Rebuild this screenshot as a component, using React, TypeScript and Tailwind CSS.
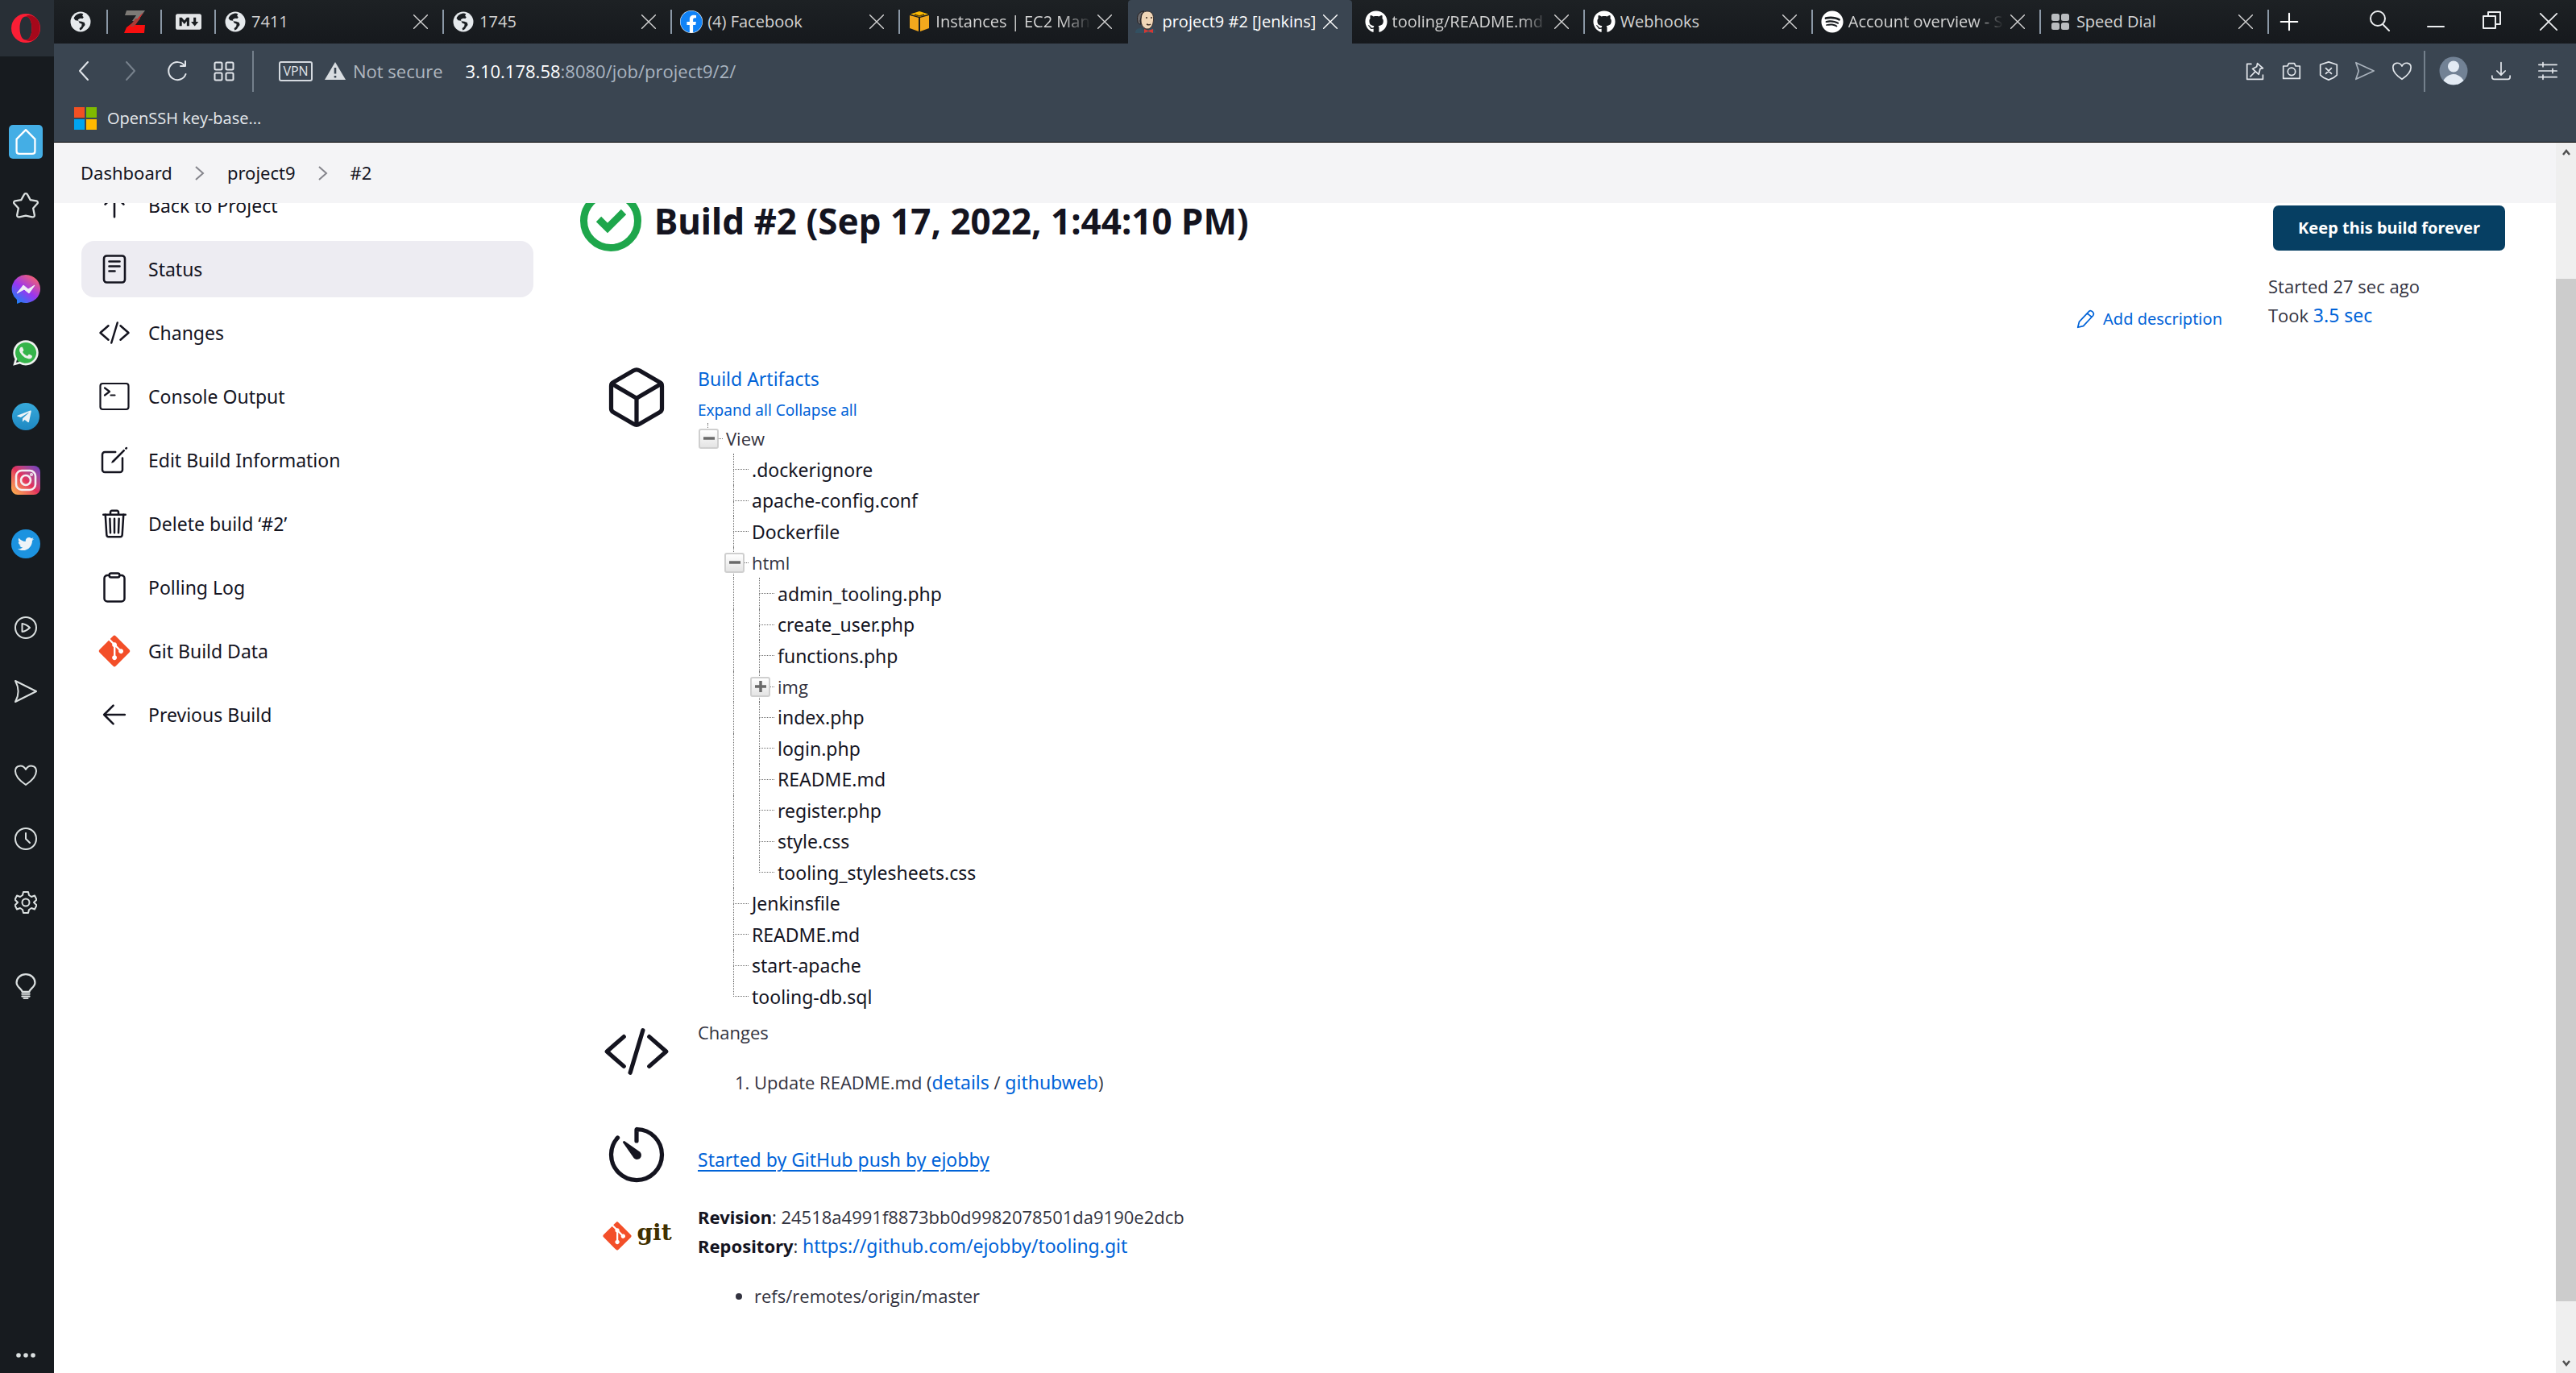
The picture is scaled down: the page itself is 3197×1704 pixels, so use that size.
import React from "react";
import {
  FaFacebook,
  FaGithub,
  FaSpotify,
  FaGitAlt,
  FaTelegramPlane,
  FaTwitter,
  FaWhatsapp,
  FaMarkdown,
} from "react-icons/fa";
import {
  IoCubeOutline,
  IoCodeSlashOutline,
  IoTimerOutline,
  IoTrashOutline,
  IoClipboardOutline,
  IoCreateOutline,
} from "react-icons/io5";

type Kids = { children: React.ReactNode };

/* Thin line icon on a 28 unit grid */
function Line({ children, size = "size-7", width = 2 }: Kids & { size?: string; width?: number }) {
  return (
    <svg
      viewBox="0 0 28 28"
      className={`${size} shrink-0`}
      fill="none"
      stroke="currentColor"
      strokeWidth={width}
      strokeLinecap="round"
      strokeLinejoin="round"
      aria-hidden="true"
    >
      {children}
    </svg>
  );
}

/* ---------- Favicons ---------- */

function Globe() {
  return (
    <svg viewBox="0 0 28 28" className="size-7 shrink-0" aria-hidden="true">
      <circle cx="14" cy="14" r="12.500" fill="#e6eaed" />
      <path
        d="M15 3.500c-4.500 0-8 2.400-9.400 6.200l2 2.600 3.600.4 1.400 2.800 3 1.200-.4 3-2.600 2.600.6 2.200c2-.4 3.400-1.600 4-3.400l2.400-3-.8-3-3.400-1.400-3.800-.4-.8-2 2.800-1.600 3 .4 1.200-1.800-1.600-1.600 1-2.400z"
        fill="#1a1e22"
      />
    </svg>
  );
}

function ZIcon() {
  return (
    <svg viewBox="0 0 28 28" className="size-7 shrink-0" aria-hidden="true">
      <path d="M4 0h23l-9 13H11l5-7H2z" fill="#7d7a76" />
      <path d="M17 11l8-9-10 16h12l-1 10H1l3-7z" fill="#f80f0f" />
      <path d="M15 10h6l-8 10H8z" fill="#a83c36" />
    </svg>
  );
}

function CubeFav() {
  return (
    <svg viewBox="0 0 28 28" className="size-7 shrink-0" aria-hidden="true">
      <path d="M2 6l11 3v17L2 22z" fill="#f2a81d" />
      <path d="M26 6L15 9v17l11-4z" fill="#f2a81d" />
      <path d="M14 1l11 3.400L14 8 3 4.400z" fill="#f9b800" />
      <path d="M8 5l6 2 6-2" fill="none" stroke="#5a3c08" strokeWidth="1.500" />
    </svg>
  );
}

function JenkinsFav() {
  return (
    <svg viewBox="0 0 28 28" className="size-7 shrink-0" aria-hidden="true">
      <path d="M1 28c0-4 2-6 7-6l6 3 6-3c4 0 6 2 6 6z" fill="#335061" />
      <path d="M8 12C8 4 11 1 16 1c6 0 8 5 7.500 11C23 19 20 23 16 23S8 19 8 12z" fill="#f0d6b7" stroke="#3b3331" strokeWidth="1" />
      <path d="M4 14C2 6 6 1 12 1c-3 2-4 5-4 8l-1 4 1 4c-2 0-4-1-4-3z" fill="#6d6b6d" stroke="#231f20" />
      <path d="M14 9h2M20 9h2M15 17c2 1 4 1 5 0" stroke="#3b2a20" strokeWidth="1.400" fill="none" />
      <path d="M12 23l5 2 6-2v5l-6-2-5 2z" fill="#d33833" />
    </svg>
  );
}

function DialFav() {
  return (
    <svg viewBox="0 0 28 28" className="size-7 shrink-0 text-[#b9bcbf]" fill="currentColor" aria-hidden="true">
      <rect x="3" y="4" width="10" height="9" rx="2.500" />
      <rect x="15" y="4" width="10" height="9" rx="2.500" />
      <rect x="3" y="15" width="10" height="9" rx="2.500" />
      <rect x="15" y="15" width="10" height="9" rx="2.500" />
    </svg>
  );
}

/* ---------- Tab strip ---------- */

const tabs = [
  { title: "7411", icon: <Globe /> },
  { title: "1745", icon: <Globe /> },
  { title: "(4) Facebook", icon: <FaFacebook className="size-7 shrink-0 rounded-full bg-white text-[#1183f7]" /> },
  { title: "Instances | EC2 Mana", icon: <CubeFav />, fade: true },
  { title: "project9 #2 [Jenkins]", icon: <JenkinsFav />, active: true },
  { title: "tooling/README.md", icon: <FaGithub className="size-7 shrink-0 text-white" />, fade: true, quiet: true },
  { title: "Webhooks", icon: <FaGithub className="size-7 shrink-0 text-white" /> },
  { title: "Account overview - S", icon: <FaSpotify className="size-7 shrink-0 text-white" />, fade: true },
  { title: "Speed Dial", icon: <DialFav /> },
];

function Divider({ hidden = false }: { hidden?: boolean }) {
  return <span className={`h-[30px] w-[2px] shrink-0 ${hidden ? "bg-transparent" : "bg-[#8b98a6]"}`} />;
}

function Cross({ size }: { size: string }) {
  return (
    <Line size={size} width={2.2}>
      <path d="M1 1l26 26M27 1L1 27" />
    </Line>
  );
}

function TabStrip() {
  return (
    <div className="flex h-[54px] items-center bg-gradient-to-b from-[#1d2124] to-[#16191d] text-[20px] text-[#d4d4d4]">
      <button aria-label="Pinned tab" className="flex w-[65px] justify-center"><Globe /></button>
      <Divider />
      <button aria-label="Pinned tab" className="flex w-[65px] justify-center"><ZIcon /></button>
      <Divider />
      <button aria-label="Pinned tab" className="flex w-[65px] justify-center">
        <FaMarkdown className="size-8 text-[#e3e5e7]" />
      </button>
      <div className="flex h-full min-w-0 flex-1">
        {tabs.map((t) => (
          <div key={t.title} className="flex h-full min-w-0 flex-1 items-center">
            <Divider hidden={t.active || t.quiet} />
            <div
              className={`flex h-full min-w-0 flex-1 items-center gap-1 pr-[18px] ${
                t.active ? "mr-1 rounded-t-sm bg-[#3a4551] pl-2 text-white" : "pl-[10px]"
              }`}
            >
              <button className="flex min-w-0 flex-1 items-center gap-[6px] text-left">
                {t.icon}
                <span
                  className={`min-w-0 flex-1 overflow-hidden whitespace-nowrap ${
                    t.fade ? "[mask-image:linear-gradient(to_right,black_80%,transparent_98%)]" : ""
                  }`}
                >
                  {t.title}
                </span>
              </button>
              <button aria-label="Close tab"><Cross size="size-[18px]" /></button>
            </div>
          </div>
        ))}
      </div>
      <Divider />
      <button aria-label="New tab" className="flex w-[50px] justify-center text-white">
        <Line size="size-6" width={2.4}><path d="M14 2v24M2 14h24" /></Line>
      </button>
      <div className="ml-[52px] flex text-[#eceef0]">
        <button aria-label="Search tabs" className="flex w-[70px] justify-center pb-1">
          <Line size="size-7"><circle cx="12" cy="12" r="9" /><path d="M18 19l8 8" /></Line>
        </button>
        <button aria-label="Minimize" className="flex w-[70px] justify-center">
          <Line size="size-7"><path d="M4 22h20" /></Line>
        </button>
        <button aria-label="Restore" className="flex w-[70px] justify-center">
          <Line size="size-7"><path d="M3 9h15v15H3z M9 9V4h15v15h-6" /></Line>
        </button>
        <button aria-label="Close" className="flex w-[69px] items-center justify-center">
          <Cross size="size-[22px]" />
        </button>
      </div>
    </div>
  );
}

/* ---------- Address bar ---------- */

function IconButton({ label, children, className }: Kids & { label: string; className: string }) {
  return (
    <button aria-label={label} className={`flex shrink-0 justify-center ${className}`}>
      {children}
    </button>
  );
}

function AddressBar() {
  return (
    <div className="flex h-[68px] items-center bg-[#3a4551] pl-2 text-[#e1e5ea]">
      <IconButton label="Back" className="w-[58px]">
        <Line><path d="M19 3L9 14l10 11" /></Line>
      </IconButton>
      <IconButton label="Forward" className="w-[58px] text-[#77818c]">
        <Line><path d="M9 3l10 11L9 25" /></Line>
      </IconButton>
      <IconButton label="Reload" className="w-[58px]">
        <Line><path d="M23 7.500A11 11 0 1 0 24.500 18M24 2v6h-6" /></Line>
      </IconButton>
      <IconButton label="Speed dial" className="w-[58px]">
        <Line>
          <rect x="2.500" y="3.500" width="9" height="9" rx="1.500" />
          <rect x="16.500" y="3.500" width="9" height="9" rx="1.500" />
          <rect x="2.500" y="16.500" width="9" height="9" rx="1.500" />
          <rect x="16.500" y="16.500" width="9" height="9" rx="1.500" />
        </Line>
      </IconButton>
      <span className="ml-[6px] h-[51px] w-[2px] bg-[#74808c]" />
      <button className="ml-[31px] flex h-[25px] w-[42px] items-center justify-center rounded-[3px] border-2 border-[#d5dae0] text-[16px]">
        VPN
      </button>
      <button className="ml-[14px] flex items-center gap-2 text-[22px] text-[#b0b8c0]">
        <svg viewBox="0 0 28 24" className="h-6 w-7" aria-hidden="true">
          <path d="M14 1L27 23H1z" fill="#d9dde1" />
          <path d="M14 8v7.500M14 18v2.500" stroke="#3a4551" strokeWidth="2.600" />
        </svg>
        Not secure
      </button>
      <button aria-label="Page address" className="ml-7 flex-1 text-left text-[22px] text-[#a9b4c0]">
        <span className="text-white">3.10.178.58</span>:8080/job/project9/2/
      </button>
      <IconButton label="Pin page" className="w-[45px]">
        <Line size="size-6">
          <path d="M8 4H2v22h23v-6M17 3l8 7-4 1-2 8-9-8 6-3zM13 16l-6 6" />
        </Line>
      </IconButton>
      <IconButton label="Snapshot" className="w-[46px]">
        <Line size="size-6"><path d="M2 7h6l2-4h8l2 4h6v18H2z" /><circle cx="14" cy="15" r="5.500" /></Line>
      </IconButton>
      <IconButton label="Ad blocker" className="w-[45px]">
        <Line size="size-6"><path d="M14 1l12 4v15l-5 4-7 3-7-3-5-4V5zM10 10l8 8M18 10l-8 8" /></Line>
      </IconButton>
      <IconButton label="My flow" className="w-[46px] text-[#a9b2bc]">
        <Line size="size-6"><path d="M1 2l26 12L1 26l4-12z" /></Line>
      </IconButton>
      <IconButton label="Bookmark page" className="w-[45px]">
        <Line size="size-6"><path d="M14 26C8 22 1 15 1 9c0-7 9-9 13-2 4-7 13-5 13 2 0 6-7 13-13 17z" /></Line>
      </IconButton>
      <span className="ml-[5px] h-[51px] w-[2px] bg-[#74808c]" />
      <IconButton label="Profile" className="ml-[17px] w-[36px]">
        <svg viewBox="0 0 36 36" className="size-9" aria-hidden="true">
          <circle cx="18" cy="18" r="17.500" fill="#728295" />
          <circle cx="18" cy="12.500" r="7" fill="#e3ebf4" />
          <path d="M5.500 30c2-4 7-8 12.500-8s10.500 4 12.500 8a17.500 17.500 0 0 1-25 0z" fill="#e3ebf4" />
        </svg>
      </IconButton>
      <IconButton label="Downloads" className="ml-[12px] w-[58px]">
        <Line size="size-6"><path d="M14 2v18M8 14l6 6 6-6M1 21v2c0 2 1 3 3 3h20c2 0 3-1 3-3v-2" /></Line>
      </IconButton>
      <IconButton label="Easy setup" className="mr-[6px] w-[58px]">
        <Line size="size-6"><path d="M1 5h26M1 14h26M1 23h26M7 2v6M21 11v6M7 20v6" /></Line>
      </IconButton>
    </div>
  );
}

function Bookmarks() {
  return (
    <div className="flex h-[55px] items-center border-b border-black bg-[#3a4551] pb-1 pl-[25px]">
      <a href="#bookmark" className="flex items-center gap-[13px] text-[20px] text-[#e6e9ec]">
        <span className="grid size-7 grid-cols-2 gap-[2px]">
          <span className="bg-[#f25022]" />
          <span className="bg-[#7fba00]" />
          <span className="bg-[#00a4ef]" />
          <span className="bg-[#ffb900]" />
        </span>
        OpenSSH key-base...
      </a>
    </div>
  );
}

/* ---------- Opera side rail ---------- */

const railGroups: { label: string; icon: React.ReactNode }[][] = [
  [
    {
      label: "Home",
      icon: (
        <span className="flex size-[42px] items-center justify-center rounded-[5px] bg-[#44aee5] text-white">
          <Line size="size-8"><path d="M14 1l10 10v13c0 2-1 3-3 3H7c-2 0-3-1-3-3V11z" /></Line>
        </span>
      ),
    },
    {
      label: "Pinboards",
      icon: (
        <Line size="size-8">
          <path d="M14 1c1 0 1.500.500 2 1.500L19 8l6.500 1c1.500.500 2 2 1 3L22 17l1.500 7.500c0 1.500-1 2.500-2.500 2L14 25l-7 1.500c-1.500.500-2.500-.500-2.500-2L6 17l-4.500-5c-1-1-.500-2.500 1-3L9 8l3-5.500C12.500 1.500 13 1 14 1z" />
        </Line>
      ),
    },
  ],
  [
    {
      label: "Messenger",
      icon: (
        <svg viewBox="0 0 36 36" className="size-9" aria-hidden="true">
          <defs>
            <linearGradient id="msg" x1="0.1" y1="1" x2="0.8" y2="0">
              <stop offset="0" stopColor="#0a8cf5" />
              <stop offset="0.500" stopColor="#9a35f0" />
              <stop offset="1" stopColor="#fc6568" />
            </linearGradient>
          </defs>
          <path d="M18 0a18 17.500 0 1 1-6 34l-5 2v-5A17.500 17.500 0 0 1 18 0z" fill="url(#msg)" />
          <path d="M7 23l8-10 6 5 8-5-7 10-6-5z" fill="#f0eef5" stroke="#f0eef5" strokeLinejoin="round" />
        </svg>
      ),
    },
    {
      label: "WhatsApp",
      icon: (
        <span className="relative flex size-[34px] items-center justify-center">
          <span className="absolute inset-[3px] rounded-full bg-[#35b44a]" />
          <FaWhatsapp className="relative size-[36px] text-[#eef1ee]" />
        </span>
      ),
    },
    {
      label: "Telegram",
      icon: (
        <span className="flex size-[34px] items-center justify-center rounded-full bg-gradient-to-b from-[#37aadb] to-[#1e88c2]">
          <FaTelegramPlane className="mr-1 size-5 text-[#eef3f7]" />
        </span>
      ),
    },
    {
      label: "Instagram",
      icon: (
        <span className="flex size-9 items-center justify-center rounded-[8px] bg-gradient-to-tr from-[#fdb74a] via-[#e22f5c] to-[#6a3ac8] text-[#f4eef2]">
          <Line size="size-7" width={2.6}>
            <rect x="2" y="2" width="24" height="24" rx="7" />
            <circle cx="14" cy="14" r="6" />
            <circle cx="21" cy="7" r="0.700" />
          </Line>
        </span>
      ),
    },
    {
      label: "Twitter",
      icon: (
        <span className="flex size-9 items-center justify-center rounded-full bg-[#1c93e0]">
          <FaTwitter className="size-5 text-[#eef3f7]" />
        </span>
      ),
    },
  ],
  [
    {
      label: "Player",
      icon: <Line><circle cx="14" cy="14" r="13" /><path d="M9.500 9v10c3.500-.500 7-2.500 9.500-5-2.500-2.500-6-4.500-9.500-5z" /></Line>,
    },
    { label: "My Flow", icon: <Line><path d="M1 1l26 13L1 27c5-9 5-17 0-26z" /></Line> },
  ],
  [
    {
      label: "Bookmarks",
      icon: <Line><path d="M14 26C8 22 1 16 1 9c0-7 9-9 13-2 4-7 13-5 13 2 0 7-7 13-13 17z" /></Line>,
    },
    { label: "History", icon: <Line><circle cx="14" cy="14" r="13" /><path d="M14 7v7l5 5" /></Line> },
    {
      label: "Settings",
      icon: (
        <Line>
          <circle cx="14" cy="14" r="4.500" />
          <path d="M11 1h6l1 4 3 2 4-1.500 2.500 5L24 14l3.500 3.500-2.500 5L21 21l-3 2-1 4h-6l-1-4-3-2-4 1.500-2.500-5L4 14 .500 10.500l2.500-5L7 7l3-2z" />
        </Line>
      ),
    },
  ],
  [
    {
      label: "Tips",
      icon: (
        <Line size="size-8">
          <path d="M10 20c0-3-6-5-6-10a10 9 0 0 1 20 0c0 5-6 7-6 10zM10 22.500h8M10 25h8M12 27.500h4" />
        </Line>
      ),
    },
  ],
];

function SideRail() {
  return (
    <nav aria-label="Browser sidebar" className="flex w-[67px] shrink-0 flex-col bg-[#171b1f] pr-[3px] text-[#dbe0e0]">
      <div className="-mr-[3px] flex h-[70px] shrink-0 items-center justify-center bg-[#282f36] pr-[3px]">
        <svg viewBox="0 0 36 36" className="size-9" aria-hidden="true">
          <path fillRule="evenodd" d="M18 0a18 18 0 1 0 0 36 18 18 0 0 0 0-36zm0 3.500c4.500 0 7.500 6 7.500 14.500s-3 14.500-7.500 14.500S10.500 26.500 10.500 18 13.500 3.500 18 3.500z" fill="#fa1e35" />
          <path d="M18 3.500c4-4 17.500 0 17.500 14.500S22 36.500 18 32.500c4.500 0 7.500-6 7.500-14.500S22.500 3.500 18 3.500z" fill="#a5081b" />
        </svg>
      </div>
      <div className="mt-[66px] flex flex-col gap-[25px]">
        {railGroups.map((group) => (
          <div key={group[0].label} className="flex flex-col">
            {group.map((item) => (
              <button key={item.label} aria-label={item.label} className="flex h-[79px] items-center justify-center">
                {item.icon}
              </button>
            ))}
          </div>
        ))}
      </div>
      <button aria-label="Sidebar setup" className="mt-auto mb-2 flex h-7 items-center justify-center">
        <svg viewBox="0 0 28 28" className="size-7" fill="currentColor" aria-hidden="true">
          <circle cx="5" cy="14" r="2.800" />
          <circle cx="14" cy="14" r="2.800" />
          <circle cx="23" cy="14" r="2.800" />
        </svg>
      </button>
    </nav>
  );
}

/* ---------- Jenkins side panel ---------- */

const sideTasks = [
  { label: "Back to Project", icon: <Line size="size-10" width={1.8}><path d="M14 24V5M6 13l8-8 8 8" /></Line> },
  {
    label: "Status",
    active: true,
    icon: (
      <svg viewBox="0 0 40 40" className="size-10" fill="none" stroke="currentColor" strokeWidth="2.600" strokeLinecap="round" aria-hidden="true">
        <rect x="7" y="3.500" width="26" height="33" rx="3.500" />
        <path d="M13.500 10.500h13M13.500 16.500h13M13.500 22.500h7" />
      </svg>
    ),
  },
  { label: "Changes", icon: <IoCodeSlashOutline className="size-10" /> },
  {
    label: "Console Output",
    icon: (
      <svg viewBox="0 0 40 40" className="size-10" fill="none" stroke="currentColor" strokeWidth="2.200" strokeLinecap="round" strokeLinejoin="round" aria-hidden="true">
        <rect x="2.500" y="4" width="35" height="32" rx="3" />
        <path d="M8 9.500l6 4.500-6 4.500M15.500 18.500h5" />
      </svg>
    ),
  },
  { label: "Edit Build Information", icon: <IoCreateOutline className="size-10" /> },
  { label: "Delete build ‘#2’", icon: <IoTrashOutline className="size-10" /> },
  { label: "Polling Log", icon: <IoClipboardOutline className="size-10" /> },
  { label: "Git Build Data", icon: <FaGitAlt className="size-11 text-[#f34f29]" /> },
  { label: "Previous Build", icon: <Line size="size-10" width={1.8}><path d="M23 14H5M13 6l-8 8 8 8" /></Line> },
];

function SidePanel() {
  return (
    <nav aria-label="Build tasks" className="flex w-[561px] shrink-0 flex-col gap-[9px] font-['Noto_Sans'] text-[23px] text-[#14141f]">
      {sideTasks.map((task) => (
        <a
          key={task.label}
          href="#task"
          className={`flex h-[70px] items-center gap-5 rounded-2xl pl-[19px] ${task.active ? "bg-[#edecf2]" : ""}`}
        >
          <span className="flex w-11 justify-center">{task.icon}</span>
          {task.label}
        </a>
      ))}
    </nav>
  );
}

/* ---------- Artifact tree ---------- */

type Row = { name: string; level: 0 | 1 | 2; toggle?: "open" | "closed"; last?: boolean };

const treeRows: Row[] = [
  { name: "View", level: 0, toggle: "open", last: true },
  { name: ".dockerignore", level: 1 },
  { name: "apache-config.conf", level: 1 },
  { name: "Dockerfile", level: 1 },
  { name: "html", level: 1, toggle: "open" },
  { name: "admin_tooling.php", level: 2 },
  { name: "create_user.php", level: 2 },
  { name: "functions.php", level: 2 },
  { name: "img", level: 2, toggle: "closed" },
  { name: "index.php", level: 2 },
  { name: "login.php", level: 2 },
  { name: "README.md", level: 2 },
  { name: "register.php", level: 2 },
  { name: "style.css", level: 2 },
  { name: "tooling_stylesheets.css", level: 2, last: true },
  { name: "Jenkinsfile", level: 1 },
  { name: "README.md", level: 1 },
  { name: "start-apache", level: 1 },
  { name: "tooling-db.sql", level: 1, last: true },
];

function ArtifactTree() {
  return (
    <ul className="grid h-[731px] auto-rows-fr">
      {treeRows.map((row, i) => (
        <li key={i} className="flex">
          {row.level > 0 && <span className="w-8" />}
          {row.level > 1 && (
            <span className="flex w-8 pl-3">
              <span className="border-l border-dotted border-[#707070]" />
            </span>
          )}
          <span className="relative flex w-[35px] flex-col pr-1 pl-3">
            <span className="flex-1 border-b border-l border-dotted border-[#707070]" />
            <span className={`flex-1 border-dotted border-[#707070] ${row.last ? "" : "border-l"}`} />
            {row.toggle && (
              <button
                aria-label={`${row.toggle === "open" ? "Collapse" : "Expand"} ${row.name}`}
                className="absolute inset-y-0 left-[1px] my-auto flex size-[25px] items-center justify-center rounded-[3px] border-2 border-[#cfcfcf] bg-gradient-to-b from-white to-[#e4e4e4] text-[#6a6a6a]"
              >
                <svg viewBox="0 0 16 16" className="size-4" stroke="currentColor" strokeWidth="3.500" aria-hidden="true">
                  <path d={row.toggle === "open" ? "M1 8h14" : "M1 8h14M8 1v14"} />
                </svg>
              </button>
            )}
          </span>
          {row.toggle ? (
            <span className="flex items-center text-[#333340]">{row.name}</span>
          ) : (
            <a href="#file" className="flex items-center font-['Noto_Sans'] text-[23px] text-[#14141f]">
              {row.name}
            </a>
          )}
        </li>
      ))}
    </ul>
  );
}

/* ---------- Build page ---------- */

function Section({ icon, children, className }: Kids & { icon: React.ReactNode; className: string }) {
  return (
    <section className={`flex gap-[18px] ${className}`}>
      <div className="flex w-[116px] shrink-0 justify-center text-[#14141f]">{icon}</div>
      <div className="min-w-0 flex-1">{children}</div>
    </section>
  );
}

function Link({ children, className = "text-[23px]" }: Kids & { className?: string }) {
  return (
    <a href="#link" className={`font-['Noto_Sans'] text-[#0063d8] ${className}`}>
      {children}
    </a>
  );
}

function BuildPage() {
  return (
    <main className="flex min-w-0 flex-1 gap-[57px] pt-4 text-[22px] leading-[36px] text-[#333340]">
      <div className="min-w-0 flex-1">
        <h1 className="flex h-[76px] items-center gap-4 font-['Noto_Sans'] text-[44px] font-bold text-[#14141f]">
          <svg viewBox="0 0 76 76" className="size-[76px]" fill="none" stroke="#1ea64b" aria-hidden="true">
            <circle cx="38" cy="38" r="33.500" strokeWidth="9" />
            <path d="M23 36l11 11 20-20" strokeWidth="9" />
          </svg>
          Build #2 (Sep 17, 2022, 1:44:10 PM)
        </h1>
        <div className="mt-[66px] flex justify-end">
          <Link className="flex items-center gap-[9px] text-[20px]">
            <Line size="size-6">
              <path d="M2 26l2-8L18 3c3-3 9 2 6 6L10 24zM16 6l6 5" />
            </Line>
            Add description
          </Link>
        </div>

        <Section icon={<IoCubeOutline className="size-[84px]" />} className="mt-[37px] pl-3">
          <div className="flex h-[37px] items-center"><Link>Build Artifacts</Link></div>
          <div className="flex h-[37px] items-center gap-[5px] pt-1">
            <Link className="text-[19px]">Expand all</Link>
            <Link className="text-[19px]">Collapse all</Link>
          </div>
          <ArtifactTree />
        </Section>

        <Section icon={<IoCodeSlashOutline className="size-[84px]" />} className="mt-[7px] pl-3">
          <p>Changes</p>
          <ol className="mt-[26px] ml-[70px] list-decimal">
            <li>
              Update README.md (<Link>details</Link> / <Link>githubweb</Link>)
            </li>
          </ol>
        </Section>

        <Section icon={<IoTimerOutline className="size-[84px]" />} className="mt-[30px] items-center pl-3">
          <p className="pt-3">
            <Link className="text-[23px] underline decoration-2 underline-offset-4">Started by GitHub push by ejobby</Link>
          </p>
        </Section>

        <Section
          icon={
            <span className="mt-[22px] flex h-10 items-center text-[#413000]">
              <FaGitAlt className="size-10 text-[#f34f29]" />
              <span className="ml-1 pb-2 font-['DejaVu_Serif'] text-[28px] font-bold">git</span>
            </span>
          }
          className="mt-[17px] pl-3"
        >
          <p>
            <b className="font-['Noto_Sans'] text-[#14141f]">Revision</b>: 24518a4991f8873bb0d9982078501da9190e2dcb
          </p>
          <p>
            <b className="font-['Noto_Sans'] text-[#14141f]">Repository</b>: <Link>https://github.com/ejobby/tooling.git</Link>
          </p>
          <ul className="mt-[26px] ml-[70px] list-disc">
            <li>refs/remotes/origin/master</li>
          </ul>
        </Section>
      </div>

      <aside className="w-[294px] shrink-0 pt-[19px]">
        <button className="ml-auto block h-14 w-[288px] rounded-[7px] bg-[#063f63] font-['Noto_Sans'] text-[20px] font-bold text-white">
          Keep this build forever
        </button>
        <p className="mt-[26px]">Started 27 sec ago</p>
        <p>Took <Link>3.5 sec</Link></p>
      </aside>
    </main>
  );
}

function Chevron() {
  return (
    <svg viewBox="0 0 12 20" className="h-5 w-3" fill="none" stroke="#85858c" strokeWidth="2" aria-hidden="true">
      <path d="M1 2l9 8-9 8" />
    </svg>
  );
}

function Scrollbar() {
  return (
    <div className="flex w-[25px] shrink-0 flex-col items-center justify-between bg-[#efefef] py-2" aria-hidden="true">
      <svg viewBox="0 0 10 8" className="h-2 w-[10px]" fill="none" stroke="#505050" strokeWidth="2.500"><path d="M1 7l4-5 4 5" /></svg>
      <div className="mt-[153px] mb-[73px] w-full flex-1 bg-[#cccccc]" />
      <svg viewBox="0 0 10 8" className="h-2 w-[10px]" fill="none" stroke="#505050" strokeWidth="2.500"><path d="M1 1l4 5 4-5" /></svg>
    </div>
  );
}

export default function App() {
  return (
    <div className="flex h-screen overflow-hidden bg-white font-['Open_Sans',sans-serif]">
      <SideRail />
      <div className="flex min-w-0 flex-1 flex-col">
        <TabStrip />
        <AddressBar />
        <Bookmarks />
        <div className="flex min-h-0 flex-1">
          <div className="flex min-w-0 flex-1 flex-col">
            <nav aria-label="Breadcrumb" className="flex h-[75px] shrink-0 items-center gap-7 bg-[#f4f4f6] pl-[33px] font-['Noto_Sans'] text-[22px] text-[#14141f]">
              <a href="#dashboard">Dashboard</a>
              <Chevron />
              <a href="#project9">project9</a>
              <Chevron />
              <a href="#2">#2</a>
            </nav>
            <div className="min-h-0 flex-1 overflow-hidden">
              <div className="-mt-8 flex gap-[58px] pr-[63px] pl-[34px]">
                <SidePanel />
                <BuildPage />
              </div>
            </div>
          </div>
          <Scrollbar />
        </div>
      </div>
    </div>
  );
}
